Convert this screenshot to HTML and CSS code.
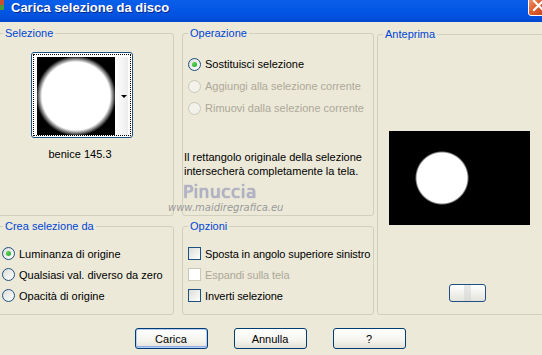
FILE: index.html
```html
<!DOCTYPE html>
<html lang="it">
<head>
    <meta charset="UTF-8">
    <title>Carica selezione da disco</title>
    <link rel="stylesheet" href="styles.css">
</head>
<body>

<div class="window">
    <!-- Barra del titolo -->
    <div class="titlebar">
        <svg class="app-icon" width="6" height="12" viewBox="0 0 6 12">
            <rect x="0" y="0" width="4" height="5" fill="#c8502a"/>
            <rect x="0" y="5" width="4" height="5" fill="#4a9a3a"/>
        </svg>
        <span class="title">Carica selezione da disco</span>
        <span class="close">
            <svg width="21" height="21" viewBox="0 0 21 21">
                <path d="M6 6 L15 15 M15 6 L6 15" stroke="#fff" stroke-width="2.2" stroke-linecap="square"/>
            </svg>
        </span>
    </div>

    <div class="content">
        <!-- Selezione -->
        <fieldset class="box sel">
            <legend>Selezione</legend>
            <div class="thumb-wrap">
                <div class="thumb">
                    <div class="focus">
                        <div class="thumb-img"></div>
                        <div class="thumb-drop"><span class="arrow"></span></div>
                    </div>
                </div>
                <div class="caption">benice 145.3</div>
            </div>
        </fieldset>

        <!-- Operazione -->
        <fieldset class="box op">
            <legend>Operazione</legend>
            <div class="list op-list">
                <div class="row"><span class="radio checked"></span>Sostituisci selezione</div>
                <div class="row disabled"><span class="radio"></span>Aggiungi alla selezione corrente</div>
                <div class="row disabled"><span class="radio"></span>Rimuovi dalla selezione corrente</div>
            </div>
            <p class="note">Il rettangolo originale della selezione<br>intersecherà completamente la tela.</p>
        </fieldset>

        <!-- Anteprima -->
        <fieldset class="box preview">
            <legend>Anteprima</legend>
            <div class="preview-img"></div>
            <div class="preview-btn"></div>
        </fieldset>

        <!-- Crea selezione da -->
        <fieldset class="box crea">
            <legend>Crea selezione da</legend>
            <div class="list crea-list">
                <div class="row"><span class="radio checked"></span>Luminanza di origine</div>
                <div class="row"><span class="radio"></span>Qualsiasi val. diverso da zero</div>
                <div class="row"><span class="radio"></span>Opacità di origine</div>
            </div>
        </fieldset>

        <!-- Opzioni -->
        <fieldset class="box opz">
            <legend>Opzioni</legend>
            <div class="list opz-list">
                <div class="row"><span class="check"></span>Sposta in angolo superiore sinistro</div>
                <div class="row disabled"><span class="check"></span>Espandi sulla tela</div>
                <div class="row"><span class="check"></span>Inverti selezione</div>
            </div>
        </fieldset>
    </div>

    <div class="buttons">
        <button class="btn default">Carica</button>
        <button class="btn">Annulla</button>
        <button class="btn">?</button>
    </div>

    <div class="watermark">
        <div class="wm-name">Pinuccia</div>
        <div class="wm-url">www.maidiregrafica.eu</div>
    </div>
</div>

</body>
</html>
```

FILE: styles.css
```css
body {
    margin: 0;
    padding: 0;
    background-color: #ECE9D8;
}
.window {
    position: relative;
    width: 542px;
    height: 355px;
    overflow: hidden;
    background-color: #ECE9D8;
    font-family: "Liberation Sans", Arial, sans-serif;
    font-size: 11px;
    color: #000;
}

/* barra del titolo */
.titlebar {
    height: 22px;
    display: flex;
    align-items: flex-start;
    overflow: hidden;
    background: linear-gradient(#0A5FEA 0, #0255E3 12px, #0150DC 18px, #0047CF 22px);
}
.title {
    margin-left: 5px;
    line-height: 16px;
    font-size: 13px;
    font-weight: bold;
    color: #fff;
    text-shadow: 1px 1px 0 #0A2A8A;
}
.close {
    margin-left: auto;
    margin-right: -7px;
    margin-top: -5px;
    width: 21px;
    height: 21px;
    box-sizing: border-box;
    border: 1px solid #fff;
    border-radius: 3px;
    background: linear-gradient(135deg, #F0A080 0, #E06030 45%, #C23A10 100%);
    display: flex;
}
.close svg {
    margin: -1px;
}

/* griglia dei gruppi */
.content {
    display: grid;
    grid-template-columns: 177px 203px 170px;
    grid-template-rows: 189px 95px;
    row-gap: 4px;
    margin: 5px 0 0 -3px;
}
.box {
    margin: 0;
    padding: 0;
    min-width: 0;
    border: 1px solid #D0D0BF;
    border-radius: 3px;
}
.box legend {
    margin-left: 5px;
    padding: 0 2px;
    line-height: 13px;
    color: #0046D5;
}
.op, .opz {
    margin: 0 3px 0 8px;
}
.preview {
    grid-column: 3;
    grid-row: 1 / span 2;
    margin-top: 1px;
}

/* selezione */
.thumb-wrap {
    width: 102px;
    margin: 12px 0 0 33px;
}
.thumb {
    width: 102px;
    height: 86px;
    box-sizing: border-box;
    border: 1px solid #1C4F84;
    border-radius: 3px;
    padding: 1px;
    background: #fff;
}
.focus {
    display: flex;
    height: 100%;
    box-sizing: border-box;
    border: 1px dotted #000;
    padding: 2px 1px 0 3px;
}
.thumb-img {
    width: 78px;
    height: 78px;
    background: radial-gradient(circle at 39px 39px, #fff 0, #fff 34px, #000 40px);
}
.thumb-drop {
    width: 13px;
    height: 78px;
    display: flex;
    align-items: center;
    justify-content: flex-end;
    background: linear-gradient(to right, #fff, #ECECEC);
}
.arrow {
    width: 0;
    height: 0;
    margin-right: 1px;
    border-left: 3px solid transparent;
    border-right: 3px solid transparent;
    border-top: 3px solid #000;
}
.caption {
    margin-top: 10px;
    margin-left: -4px;
    text-align: center;
    line-height: 13px;
}

/* liste di opzioni */
.list .row {
    display: flex;
    align-items: center;
    gap: 4px;
    white-space: nowrap;
}
.op-list {
    margin-top: 13px;
    padding-left: 5px;
}
.op-list .row {
    height: 22px;
}
.crea-list {
    margin-top: 10px;
    padding-left: 4px;
}
.crea-list .row, .opz-list .row {
    height: 21px;
}
.opz-list {
    margin-top: 10px;
    padding-left: 5px;
}
.opz-list .row {
    letter-spacing: -0.1px;
}
.row.disabled {
    color: #ACA899;
}
.radio {
    flex: none;
    width: 13px;
    height: 13px;
    box-sizing: border-box;
    border: 1px solid #1C5180;
    border-radius: 50%;
    background: linear-gradient(135deg, #DCDCD7, #fff);
    display: flex;
    align-items: center;
    justify-content: center;
}
.radio.checked::after {
    content: '';
    width: 5px;
    height: 5px;
    border-radius: 50%;
    background: radial-gradient(circle at 35% 35%, #5BD55B, #21A121);
}
.row.disabled .radio {
    border-color: #CAC8BB;
    background: #F2F1EA;
}
.check {
    flex: none;
    width: 13px;
    height: 13px;
    box-sizing: border-box;
    border: 1px solid #1C5180;
    background: linear-gradient(135deg, #DCDCD7, #fff);
}
.row.disabled .check {
    border-color: #CAC8BB;
    background: #fff;
}
.note {
    margin: 31px 0 0 1px;
    line-height: 14px;
}

/* anteprima */
.preview-img {
    width: 141px;
    height: 94px;
    margin: 90px 0 0 11px;
    background: radial-gradient(circle at 53px 47px, #fff 0, #fff 25px, #000 27px);
}
.preview-btn {
    width: 37px;
    height: 18px;
    margin: 59px 0 0 71px;
    box-sizing: border-box;
    border: 1px solid #1C4F84;
    border-radius: 3px;
    background:
        linear-gradient(90deg, transparent 40%, rgba(210,210,210,0.5) 40%, rgba(210,210,210,0.5) 60%, transparent 60%),
        linear-gradient(#fff, #E4E3DC);
}

/* pulsanti */
.buttons {
    display: flex;
    justify-content: center;
    gap: 26px;
    margin-top: 13px;
    padding-right: 2px;
}
.btn {
    width: 73px;
    height: 21px;
    padding: 0;
    font-family: "Liberation Sans", Arial, sans-serif;
    font-size: 11px;
    color: #000;
    border: 1px solid #003C74;
    border-radius: 3px;
    background: linear-gradient(#fff 0, #F5F4EE 60%, #E3E1D6 100%);
}
.btn.default {
    box-shadow: inset 0 0 0 1px #B6CCF4, inset 0 -1px 0 1px #8DAEEA;
}

/* filigrana */
.watermark {
    position: absolute;
    left: 168px;
    top: 182px;
}
.wm-name {
    margin-left: 15px;
    font-family: "DejaVu Sans", sans-serif;
    font-size: 17px;
    line-height: 20px;
    letter-spacing: 0.5px;
    color: #B4B4CC;
    text-shadow: 0 0 1px #7A7A90;
}
.wm-url {
    font-family: "DejaVu Sans", sans-serif;
    font-size: 10px;
    line-height: 12px;
    font-style: italic;
    color: #9A9A9A;
}
```
